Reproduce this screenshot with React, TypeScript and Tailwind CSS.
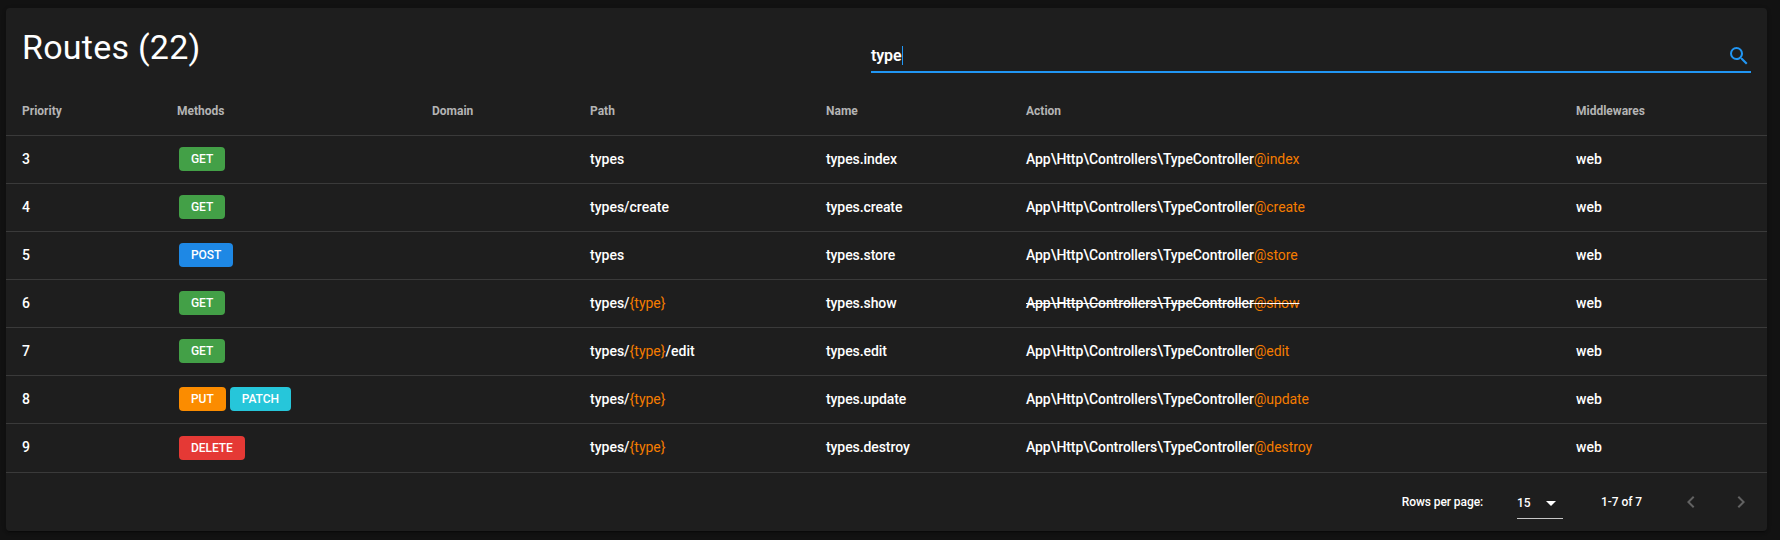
type Method = 'GET' | 'POST' | 'PUT' | 'PATCH' | 'DELETE';

interface Route {
  priority: number;
  methods: Method[];
  path: string;
  name: string;
  action: string;
  unused?: boolean;
}

const routes: Route[] = [
  { priority: 3, methods: ['GET'], path: 'types', name: 'types.index', action: 'index' },
  { priority: 4, methods: ['GET'], path: 'types/create', name: 'types.create', action: 'create' },
  { priority: 5, methods: ['POST'], path: 'types', name: 'types.store', action: 'store' },
  { priority: 6, methods: ['GET'], path: 'types/{type}', name: 'types.show', action: 'show', unused: true },
  { priority: 7, methods: ['GET'], path: 'types/{type}/edit', name: 'types.edit', action: 'edit' },
  { priority: 8, methods: ['PUT', 'PATCH'], path: 'types/{type}', name: 'types.update', action: 'update' },
  { priority: 9, methods: ['DELETE'], path: 'types/{type}', name: 'types.destroy', action: 'destroy' },
];

const methodColor: Record<Method, string> = {
  GET: 'bg-[#43a047]',
  POST: 'bg-[#1e88e5]',
  PUT: 'bg-[#fb8c00]',
  PATCH: 'bg-[#26c6da]',
  DELETE: 'bg-[#e53935]',
};

const headers = ['Priority', 'Methods', 'Domain', 'Path', 'Name', 'Action', 'Middlewares'];
const columns = 'grid grid-cols-[155px_255px_158px_236px_200px_550px_1fr] items-center';

function Icon({ d, className }: { d: string; className: string }) {
  return (
    <svg viewBox="0 0 24 24" className={`size-6 shrink-0 fill-current ${className}`}>
      <path d={d} />
    </svg>
  );
}

function Path({ value }: { value: string }) {
  return (
    <>
      {value.split(/(\{.*?\})/).map((part, i) => (
        <span key={i} className={part.startsWith('{') ? 'font-normal text-[#f57c00]' : ''}>
          {part}
        </span>
      ))}
    </>
  );
}

export default function App() {
  return (
    <div className="h-[540px] bg-[#121212] pt-2 pl-1.5 font-['Roboto',sans-serif] text-white">
      <div className="h-[523px] w-[1761px] rounded bg-[#1e1e1e] shadow-[0_3px_1px_-2px_rgba(0,0,0,0.2),0_2px_2px_0_rgba(0,0,0,0.14),0_1px_5px_0_rgba(0,0,0,0.12)]">
        <div className="flex h-[79px] items-start justify-between px-4">
          <h1 className="pt-[19px] text-[34px] leading-10 tracking-[0.25px]">Routes (22)</h1>
          <div className="mt-[31px] flex h-[34px] w-[880px] items-start border-b-2 border-[#2196f3]">
            <span className="pt-[7px] text-base leading-5 font-semibold tracking-[-0.1px]">type</span>
            <span className="mt-[7px] h-[19px] w-px bg-[#2196f3]" />
            <Icon
              className="mt-[5px] ml-auto text-[#2196f3]"
              d="M9.5,3A6.5,6.5 0 0,1 16,9.5C16,11.11 15.41,12.59 14.44,13.73L14.71,14H15.5L20.5,19L19,20.5L14,15.5V14.71L13.73,14.44C12.59,15.41 11.11,16 9.5,16A6.5,6.5 0 0,1 3,9.5A6.5,6.5 0 0,1 9.5,3M9.5,5C7,5 5,7 5,9.5C5,12 7,14 9.5,14C12,14 14,12 14,9.5C14,7 12,5 9.5,5Z"
            />
          </div>
        </div>
        <div className={`${columns} h-[49px] border-b border-[#3a3a3a] text-xs font-bold text-[#b4b4b4]`}>
          {headers.map((h) => (
            <div key={h} className="pl-4">{h}</div>
          ))}
        </div>
        <div>
          {routes.map((r) => (
            <div
              key={r.priority}
              className={`${columns} group h-12 border-b border-[#3a3a3a] pb-px text-sm font-medium last:h-[49px] last:pb-0.5`}
            >
              <div className="pl-4">{r.priority}</div>
              <div className="flex gap-1 pl-[18px] group-last:pt-0.5">
                {r.methods.map((m) => (
                  <span
                    key={m}
                    className={`${methodColor[m]} h-6 rounded px-3 text-xs leading-6 font-medium tracking-[-0.05px]`}
                  >
                    {m}
                  </span>
                ))}
              </div>
              <div />
              <div className="pl-4"><Path value={r.path} /></div>
              <div className="pl-4 tracking-[-0.08px]">{r.name}</div>
              <div className="pl-4 tracking-[-0.08px]">
                <span className={r.unused ? 'line-through' : ''}>
                  App\Http\Controllers\TypeController
                  <span className="font-normal text-[#f57c00]">@{r.action}</span>
                </span>
              </div>
              <div className="pl-4">web</div>
            </div>
          ))}
        </div>
        <div className="flex h-[58px] items-center justify-end pr-3.5 text-xs font-medium tracking-[-0.08px]">
          <span>Rows per page:</span>
          <div className="mt-0.5 ml-[34px] flex h-8 w-[46px] items-center border-b border-[#c7c7c7]">
            <span>15</span>
            <Icon className="ml-auto" d="M7,10L12,15L17,10H7Z" />
          </div>
          <span className="ml-[38px]">1-7 of 7</span>
          <Icon className="ml-[37px] text-[#626262]" d="M15.41,16.58L10.83,12L15.41,7.41L14,6L8,12L14,18L15.41,16.58Z" />
          <Icon className="ml-[26px] text-[#626262]" d="M8.59,16.58L13.17,12L8.59,7.41L10,6L16,12L10,18L8.59,16.58Z" />
        </div>
      </div>
    </div>
  );
}
